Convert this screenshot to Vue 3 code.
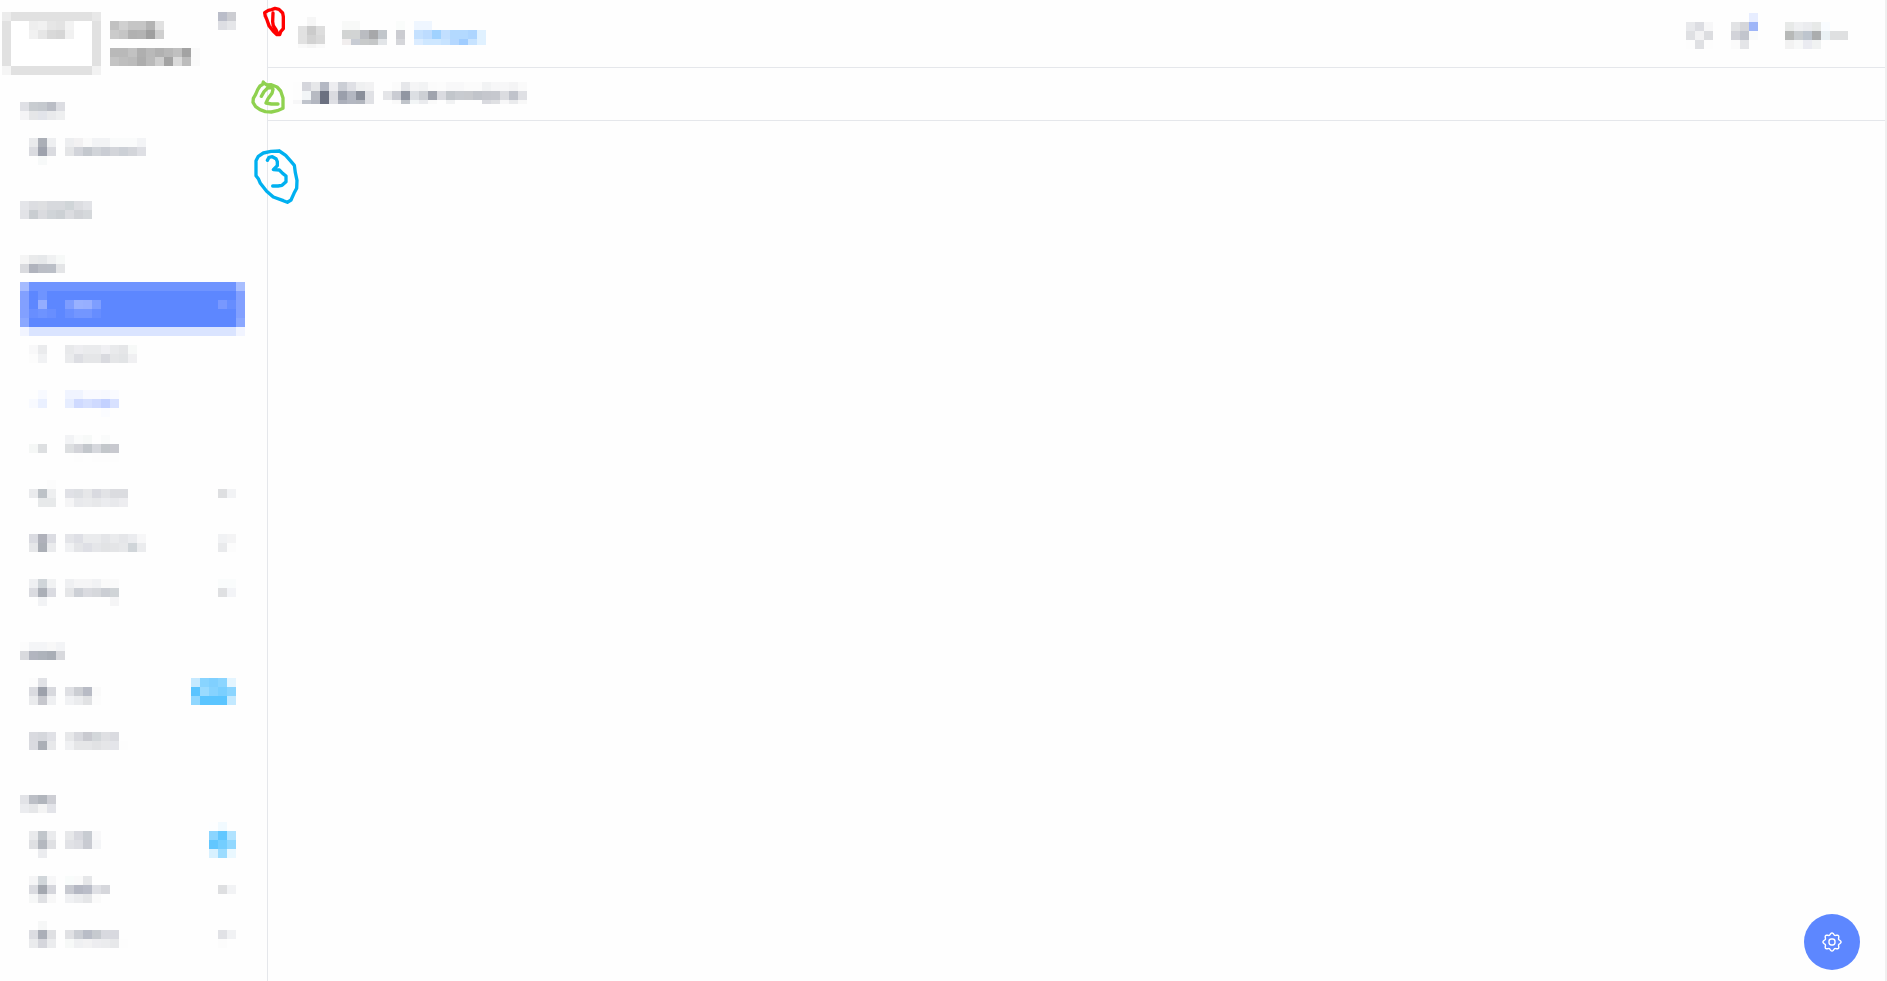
<script setup>
import { h } from 'vue'

const CELL = 9

// Draws a block of square cells. Each row is a string of colours; "c*n" repeats a
// colour n times and "-" leaves a cell empty.
const Mosaic = ({ rows, height }) => {
  const grid = rows.map((row) =>
    row.split(' ').filter(Boolean).flatMap((token) => {
      const [color, count = 1] = token.split('*')
      return Array(Number(count)).fill(color)
    })
  )
  const w = Math.max(...grid.map((r) => r.length)) * CELL
  const ht = height || rows.length * CELL
  return h(
    'svg',
    { width: w, height: ht, viewBox: `0 0 ${w} ${ht}`, 'aria-hidden': 'true', 'shape-rendering': 'crispEdges' },
    grid.flatMap((r, y) =>
      r.flatMap((c, x) =>
        c === '-' ? [] : [h('rect', { x: x * CELL, y: y * CELL, width: CELL, height: CELL, fill: '#' + c })]
      )
    )
  )
}
Mosaic.props = ['rows', 'height']

const logo = [
  'ececec e1e1e1*9 e8e8e8',
  'e1e1e1 fff*2 eeeeee f1f1f1 e6e6e6 e3e3e3 f3f3f3 fff*2 e1e1e1',
  'e1e1e1 fff*2 f1f1f1 e6e6e6 d9d9d9 d6d6d6 f1f1f1 fff*2 e1e1e1',
  'e1e1e1 fff*9 e1e1e1',
  'e1e1e1 fff*9 e1e1e1',
  'e1e1e1 fff*9 e1e1e1',
  'f5f5f5 e1e1e1*9 f2f2f2',
]
const brand = [
  'c1c1c1 d0d0d0 c5c5c5*2 b3b3b3 e1e1e1',
  'cbcbcb c5c5c5 b1b1b1 b3b3b3 9f9f9f cfcfcf',
  '',
  'b9b9b9*2 c2c2c2 afafaf b9b9b9 b1b1b1 b8b8b8 c0c0c0 a3a3a3 fafafa',
  'c4c4c4 bebebe bbbbbb adadad bababa cecece a3a3a3 dadada bcbcbc fafafa',
]
const toggle = ['babdc9 cccdd2', 'dddee3 e5e6e9']

const arrow = ['dedfe1 f2f3f5']
const activeRows = [
  'a5bbff 6f94ff*23 a8beff',
  '82a0ff 5d87ff 6f94ff 5d87ff*21 82a0ff',
  '82a0ff 5d87ff 94adff 5d87ff*2 7e9dff 99b1ff 97afff 7e9eff 5d87ff*13 7898ff 668dff 82a0ff',
  '82a0ff 688eff 6e93ff 688eff 5d87ff 698fff 7396ff*2 668dff 5d87ff*15 82a0ff',
  '8aa7ff 5d87ff*23 8aa7ff',
  'f1f4ff dae4ff*23 f1f4ff',
]

const sections = [
  {
    heading: ['dfe0e5 c8ccd0 c5c9ce babdc5 dcdde2', 'f4f4f6 e5e6e8 e2e4ea e9eaec eeeff0'],
    items: [
      {
        icon: ['', 'e9eaec abafb7 eeeff1', 'dadbe0 9ea2ad dadbe0', '- f7f9f9'],
        label: ['', 'edeef0 f2f1f2 fafafa f2f3f5*2 fafbfb*3 f3f4f6', 'e4e5e7 d2d4da c4c8ce d1d4d9 cacdd4 d3d5da ccd0d6 d3d5da dedfe4'],
      },
    ],
  },
  {
    heading: ['e4e5e9 dcdde1 dedfe1 d7d9dd*2 d0d5d8 dcdde1 e2e3e7', 'e2e3e7 c9cdd1 dadbdf d0d4d8 ccd0d4 dbdce0 d1d3d7 d5d8db'],
    items: [],
  },
  {
    heading: ['f5f5f5 e9eaeb e6e8ea f0f1f2 f7f9f8', 'd9dade b0b3bd bbbec6 bbbfc7 e4e5e7'],
    items: [
      { active: true },
      {
        icon: ['f8f8f9 eaebed', 'fcfcfc f1f2f4'],
        label: ['e8e9eb ededf0 eaebed*2 f0f0f3 e9eaec e5e6e8 f7f9f8', 'eaebed dddee3 e5e6e8*2 d9dadf e5e6e8 e2e4e6 f0f0f2'],
      },
      {
        icon: ['- f8faff', 'f8faff eaf0ff'],
        label: ['f0f4ff*2 f9faff*2 f7f9ff fafbff', 'e6edff cfdaff d6e0ff cfdaff c3d1ff d8e1ff', '-*4 fbfcff'],
      },
      {
        icon: ['', 'f5f7f6 dddfe1'],
        label: ['f2f3f5 fafbfb f7f9f8 - fafbfb', 'dddfe1 d3d4d9 c3c7cc d6d8dd c3c7cb c8c9cf', '- fdfdfd - fdfdfd*3'],
      },
      {
        icon: ['-*2 fcfcfc', 'eaebed bdc2c7 eeeff0', '- e7e9ea*2'],
        label: ['', 'e0e1e6 dddfe3 e6e7e9 d9dae0 e2e3e6 dbdce0*2', 'f5f5f6 e8e9ec eaebed e7e8ea ebecef e8e9ec ededf0'],
        end: ['', ...arrow],
      },
      {
        icon: ['', 'dadbe1 afb1ba dbdce2', 'e6e7e9 abafb6 eaebed'],
        label: ['', 'e4e5e9 dedfe5 eaebed*2 e4e5e8 eaebed e5e6e9 ebecef f7f7f8', 'f0f1f3 e4e5e8 dedfe5 e5e6e9 e2e3e5 e4e5e7 e7e8ea d0d5d9 ebecee'],
        end: ['', 'f1f2f4 f4f4f5', 'e9eaec fcfcfc'],
      },
      {
        icon: ['', 'eff0f2 d0d5d9 f1f2f3', 'dadbe0 abafb7 dadbe1', '- f2f3f5'],
        label: ['', 'eff0f2 f5f5f6*2 f1f2f4 fafafa*2', 'e5e6e8 cdd0d6 dadbe0 d6d8dc cbced4 d0d4d7', '-*5 f5f5f6'],
        end: ['', 'fafcfc*2', 'dfe0e2 f3f4f7'],
      },
    ],
  },
  {
    heading: ['fcfcfc f4f5f7*2 f8f8f8 f3f4f6', 'd9dade b2b5bf aeb3bb a9aeb6 d8d9dd'],
    items: [
      {
        icon: ['', 'fcfcfc e1e2e6', 'dadbe0 9da1ab d8d9de', 'eaebed c6c7cd eff0f2'],
        label: ['', '', 'dfe0e4 ccced3 b8bbc5 fafafa', 'f1f2f4 ebecee e1e2e4 fcfcfc'],
        end: ['', 'c5e9ff 88d4ff 80d0ff 8bd5ff e4f5ff', '5ac4ff 9adbff 86d3ff 7acfff 8bd5ff', '8fd7ff 5bc5ff*3 c3e9ff'],
      },
      {
        icon: ['', '', 'd9dadf d5d7dc e0e1e6', 'dadbe0 abafb6 e7e8ea'],
        label: ['', '', 'e7e8ea d8d9de c9cad0 d3d7da dfe0e3 dadbe0', 'f0f1f3 e5e6e8*2 e1e2e4 e5e6e8 e4e5ea fdfdfd'],
      },
    ],
  },
  {
    heading: ['', 'e2e3e7 bcbfc6 b1b5bc cdced4', 'ebecef e6e7e9 f4f4f4 e3e4e9'],
    items: [
      {
        icon: ['', 'e9eaec c1c6cb eaebed', 'dfe0e3 b4b8bf dfe0e3', '- ebecef'],
        label: ['', 'e7e8ea d8d9df c8ccd2 f8f8f9', 'e1e2e6 dddee3 c9cbd2 f4f5f7'],
        end: ['fdfeff f1faff', '8bd5ff 62c7ff b1e3ff', '62c7ff 74ceff 91d8ff', 'd8f1ff 9cdcff eaf8ff'],
      },
      {
        icon: ['', 'f5f5f6 d1d6da f7f7f8', 'dadbe0 a4a8b0 d5d6dc', 'f6f7f7 e0e1e4 f8f8f8'],
        label: ['', 'f9fcfb fafafa e6e7e9', 'c8cad1 b5b8c3 babdc8 dfe0e5 d6d7dc', 'f0f1f3 ebecee e5e6e8 fafafa'],
        end: ['', '', ...arrow],
      },
      {
        icon: ['', '- f6f7f7', 'dcdde2 abafb8 dfe0e3', 'eaebed d5d6dc ebecee'],
        label: ['', '', 'e0e1e4 cbced4 b9bdc7 c6cacf d8d9df*2', 'f7f9f8 eff0f2 f2f2f3 ededf0 ebecee e7e8ea fdfdfd'],
        end: ['', '', 'e1e2e6 f1f2f4', 'fcfcfc'],
      },
    ],
  },
]

const home = ['- f6f6f6', 'e1e1e1 cbcbcb dddddd', 'e1e1e1 d2d2d2 d9d9d9', 'f9f9f9 f5f5f5 fafafa']
const crumb = ['f8f9f8*2', 'd2d4d3 d2d4d4 babcc1 a7a8aa c1c6cb', 'f1eeee c8ccd4 c8caca c5c7c8 e2e5e8']
const slash = ['fafcfb', 'cbccd1', 'd5d6da']
const current = ['eff6ff*2', 'c5e1ff bddcff a0d2ff c2dfff b1d8ff b3d7ff*2 add5ff e0f1ff', 'dbecff cee7ff*2 c7e3ff b3d7ff aad2ff c7e3ff dcedff']
  .map((r, i) => (i === 1 ? 'c5e1ff bddcff a0d2ff c2dfff b3d9ff*2 add5ff e0f1ff' : i === 2 ? 'dbecff cee7ff*2 c7e3ff b5d8ff a0cdff c7e3ff e0f1ff' : r))
const title = [
  'fdfdfd d5d6dc e6e7e9 b4b8c3 ededf0 cbced5 dfe0e5 eff0f1 f2f2f3',
  'fdfdfd f2f5f7 b7bac2 6b7080 dadbe0 9a9fab b3b7c1 8a8f9a e0e1e5',
  'f7f7f8 c0c4cc b3b7c1 6b7080 dedfe4 acb0bb b3b7c1 b2b6be e0e1e5',
]
const subtitle = [
  '- fbfbfb e6e7ea f5f5f6 f2f3f4 fbfbfb fcfcfc f8f8f9*2 fbfbfb*2 f2f3f4 f7f7f8*2 f4f4f5 fafafa',
  'e4e5e8 caccd3 9196a2 dcdfe3 cdd0d5 a0a4ae dadbe0 c2c6cb c8cbd0 c8cace c1c4ca c5c7cd c6c8ce dbdce0 c0c3cb dfe0e4',
  '- f9f9f9 c0c4ca f2f5f6 eaebee fafafa - f1f2f3 -*3 d9dadf dfe0e3 f7f7f8 eaebed f8f8f8',
]
const search = ['e8e9ec dcdde2 f7f7f8', 'dfe0e3 f2f2f3 dcdde0', 'fdfdfd dfe0e3 fdfdfd']
const bell = ['-*2 e7edff', 'e2e3e5 d5d6da 9eb5f8', 'd2d3d9 c2c5cd fafbfb', 'fbfbfb e4e5e8']
const user = ['e7e9e8 eff0f2 ebecef e7e9e8 f9fcff', 'b7b9b8 c9cdd0 bec5ce abadae eaf1f4 dfe0e1*2', 'f2f2f2 f7f8f8 eaebf1 f0f2f2']

// Eight-lobed gear outline around the centre of a 24-unit box.
const gear =
  Array.from({ length: 96 }, (_, i) => {
    const a = (i / 96) * Math.PI * 2
    const r = 8.1 + 0.95 * Math.cos(8 * a)
    return `${i ? 'L' : 'M'}${(12 + r * Math.cos(a)).toFixed(2)} ${(12 + r * Math.sin(a)).toFixed(2)}`
  }).join('') + 'Z'
</script>

<template>
  <div class="page">
    <aside class="sidebar">
      <div class="brand">
        <Mosaic class="logo" :rows="logo" />
        <Mosaic class="name" :rows="brand" />
        <button class="plain toggle" type="button" aria-label="Menu"><Mosaic :rows="toggle" /></button>
      </div>
      <nav>
        <section v-for="(s, i) in sections" :key="i" class="group">
          <Mosaic class="heading" :rows="s.heading" />
          <template v-for="(item, j) in s.items" :key="j">
            <a v-if="item.active" class="active" href="#" aria-current="page" aria-label="Menu item"><Mosaic :rows="activeRows" /></a>
            <a v-else class="item" href="#" aria-label="Menu item">
              <span class="icon"><Mosaic :rows="item.icon" /></span>
              <Mosaic :rows="item.label" />
              <span v-if="item.end" class="end" :class="{ marker: item.end[item.end.length - 1].split(' ').length < 3 }"><Mosaic :rows="item.end" /></span>
            </a>
          </template>
        </section>
      </nav>
    </aside>

    <main class="content">
      <header class="topbar">
        <nav class="crumbs">
          <a href="#" aria-label="Home"><Mosaic :rows="home" :height="31" /></a>
          <span class="trail">
            <a href="#" aria-label="Section"><Mosaic :rows="crumb" :height="24" /></a>
            <Mosaic :rows="slash" :height="24" />
            <a href="#" aria-label="Page"><Mosaic :rows="current" :height="24" /></a>
          </span>
        </nav>
        <div class="tools">
          <button class="plain" type="button" aria-label="Search"><Mosaic :rows="search" /></button>
          <button class="plain" type="button" aria-label="Notifications"><Mosaic :rows="bell" /></button>
          <button class="plain user" type="button" aria-label="Account"><Mosaic :rows="user" /></button>
        </div>
      </header>
      <div class="titlebar">
        <Mosaic :rows="title" :height="22" />
        <Mosaic :rows="subtitle" :height="22" />
      </div>
    </main>

    <div class="edge"></div>

    <svg class="marks" width="300" height="210" viewBox="0 0 900 630" aria-hidden="true">
      <g fill="none" stroke-width="10" stroke-linecap="round" stroke-linejoin="round">
        <path stroke="#ff0000" d="M76 49L74 38L85 31L95 29L105 25L117 28L128 39L130 50V86L122 95L119 104L111 104L100 94L87 77L80 57L76 49M99 39L98 65L100 77L108 89L113 100" />
        <path stroke="#8fd14f" d="M70 246L68 253L60 258L53 269L47 283L40 295L39 307L47 320L60 329L76 335L94 336L112 332L129 325V294L122 273L111 261L94 254L81 255L70 248M64 289L72 275L83 264L95 263L99 268L96 280L84 296L78 309L94 312L114 312" />
        <path stroke="#00b0f0" d="M118 453L93 454L70 459L55 469L48 482V527L55 536L61 550L80 574L100 591L130 602L142 607L153 600L162 580L170 565L171 541L166 518L163 496L151 482L137 466L118 453M82 481L87 472L97 470L108 476L112 485V497L100 509L118 510L128 520L138 528V545L126 556L114 558H98" />
      </g>
    </svg>

    <button class="settings" type="button" aria-label="Settings">
      <svg width="24" height="24" viewBox="0 0 24 24" fill="none" stroke="#fff" stroke-width="1.4" stroke-linejoin="round" aria-hidden="true">
        <path :d="gear" />
        <rect x="9" y="9" width="6" height="6" rx="2.4" />
      </svg>
    </button>
  </div>
</template>

<style>
body {
  background: #fefefe;
}
</style>

<style scoped>
.page {
  position: relative;
  display: flex;
  min-height: 100vh;
  font-family: "Liberation Sans", sans-serif;
}
svg {
  display: block;
  flex: none;
}
a {
  display: block;
}
.plain {
  display: block;
  padding: 0;
  border: 0;
  background: none;
}
.sidebar {
  flex: none;
  box-sizing: border-box;
  width: 268px;
  padding: 12px 0 24px;
  border-right: 1px solid #e5e7eb;
}
.brand {
  display: flex;
  align-items: flex-start;
  padding: 0 31px 27px 2px;
}
.name {
  margin: 9px 0 0 9px;
}
.toggle {
  margin-left: auto;
}
.group {
  display: flex;
  flex-direction: column;
  gap: 9px;
  margin-bottom: 36px;
}
.heading,
.active {
  margin-left: 20px;
}
.item {
  display: flex;
  align-items: flex-start;
  height: 36px;
  padding: 0 31px 0 29px;
}
.icon {
  width: 36px;
}
.end {
  margin-left: auto;
}
.content {
  flex: 1;
  min-width: 0;
}
.topbar {
  display: flex;
  justify-content: space-between;
  align-items: flex-start;
  box-sizing: border-box;
  height: 68px;
  padding: 13px 37px 0 30px;
  border-bottom: 1px solid #e5e7eb;
}
.crumbs {
  display: flex;
  align-items: center;
  gap: 17px;
  padding-top: 4px;
}
.trail {
  display: flex;
  gap: 9px;
}
.tools {
  display: flex;
  align-items: flex-end;
  gap: 18px;
}
.user {
  margin-left: 9px;
}
.titlebar {
  display: flex;
  gap: 9px;
  padding: 14px 25px 16px;
  border-bottom: 1px solid #e5e7eb;
}
.edge {
  flex: none;
  width: 2px;
  background: #f0f0f0;
}
.marks {
  position: absolute;
  top: 0;
  left: 240px;
  pointer-events: none;
}
.settings {
  position: fixed;
  right: 27px;
  bottom: 11px;
  display: grid;
  place-items: center;
  width: 56px;
  height: 56px;
  padding: 0;
  border: 0;
  border-radius: 50%;
  background: #5d87ff;
}
</style>
